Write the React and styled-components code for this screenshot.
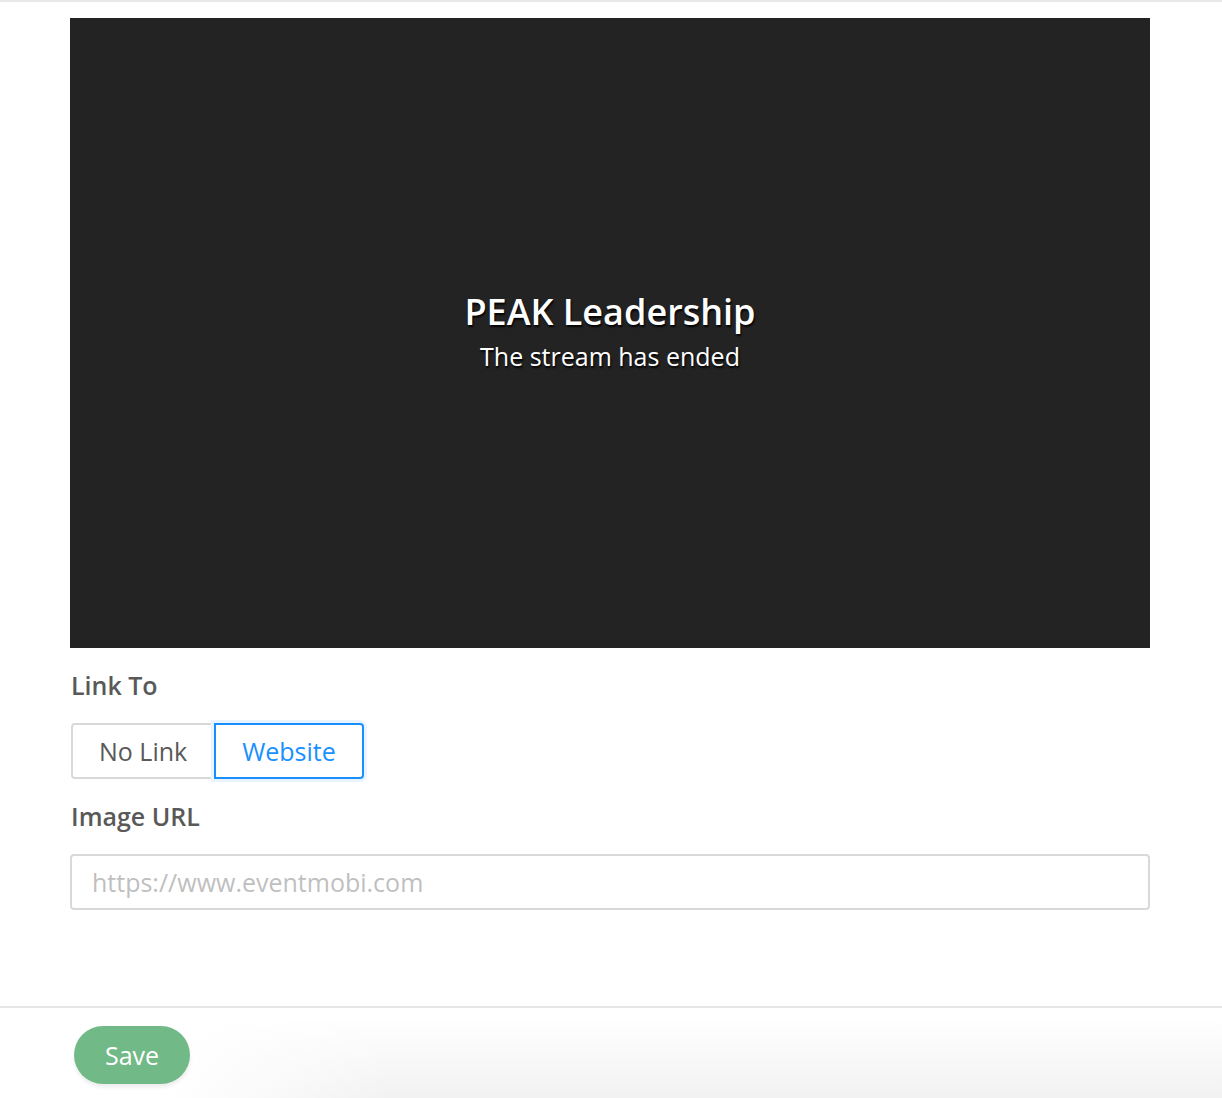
import React from 'react';
import styled, { createGlobalStyle } from 'styled-components';

const GlobalStyle = createGlobalStyle`
    html, body {
        margin: 0;
        padding: 0;
        background: #fff;
        font-family: "Open Sans", "Liberation Sans", sans-serif;
    }
    * {
        box-sizing: border-box;
    }
`

function App () {
    return (
        <Page>
            <GlobalStyle />
            <Content>
                <Player>
                    <Title>PEAK Leadership</Title>
                    <Subtitle>The stream has ended</Subtitle>
                </Player>
                <Label>Link To</Label>
                <ButtonGroup>
                    <Choice>No Link</Choice>
                    <Choice active>Website</Choice>
                </ButtonGroup>
                <Label>Image URL</Label>
                <UrlInput placeholder="https://www.eventmobi.com" />
            </Content>
            <Footer>
                <SaveButton>Save</SaveButton>
            </Footer>
        </Page>
    );
}

export default App;

const Page = styled.div`
    min-height: 1098px;
    display: flex;
    flex-direction: column;
    border-top: 2px solid #e8e8e8;
`

const Content = styled.div`
    padding: 16px 72px 96px 70px;
    display: flex;
    flex-direction: column;
`

const Player = styled.div`
    height: 630px;
    background: #232323;
    display: flex;
    flex-direction: column;
    align-items: center;
    justify-content: center;
    color: #fff;
    text-shadow: 1px 2px 2px rgba(0, 0, 0, 0.9);
`

const Title = styled.div`
    font-size: 36px;
    font-weight: 600;
    line-height: 46px;
`

const Subtitle = styled.div`
    font-size: 25px;
    line-height: 42px;
`

const Label = styled.div`
    margin: 20px 0 21px 1px;
    font-size: 25px;
    font-weight: 600;
    line-height: 34px;
    color: #595959;
`

const ButtonGroup = styled.div`
    display: flex;
    margin-left: 1px;
`

const Choice = styled.div`
    height: 56px;
    padding: 0 26px;
    display: flex;
    align-items: center;
    font-size: 25px;
    color: ${props => props.active ? '#1890ff' : '#595959'};
    border: 2px solid ${props => props.active ? '#1890ff' : '#d9d9d9'};
    border-radius: ${props => props.active ? '0 4px 4px 0' : '4px 0 0 4px'};
    box-shadow: ${props => props.active ? '0 0 0 3px #e9f4ff' : 'none'};
    margin-left: ${props => props.active ? '-1px' : '0'};
    position: relative;
    z-index: ${props => props.active ? 1 : 0};
    background: #fff;
`

const UrlInput = styled.input`
    height: 56px;
    width: 100%;
    border: 2px solid #d9d9d9;
    border-radius: 4px;
    padding: 0 20px;
    font-family: "Open Sans", "Liberation Sans", sans-serif;
    font-size: 25px;
    color: #595959;
    outline: none;
    &::placeholder {
        color: #bfbfbf;
    }
`

const Footer = styled.div`
    flex: 1;
    border-top: 2px solid #e6e6e6;
    padding: 18px 0 0 74px;
    background:
        linear-gradient(to right, #fff 14%, rgba(255, 255, 255, 0) 32%),
        linear-gradient(to bottom, #fff 10%, #f2f2f2 100%);
`

const SaveButton = styled.button`
    width: 116px;
    height: 58px;
    border: none;
    border-radius: 29px;
    background: #71b986;
    color: #fff;
    font-family: "Open Sans", "Liberation Sans", sans-serif;
    font-size: 25px;
    box-shadow: 0 3px 4px rgba(0, 0, 0, 0.08);
    cursor: pointer;
`
